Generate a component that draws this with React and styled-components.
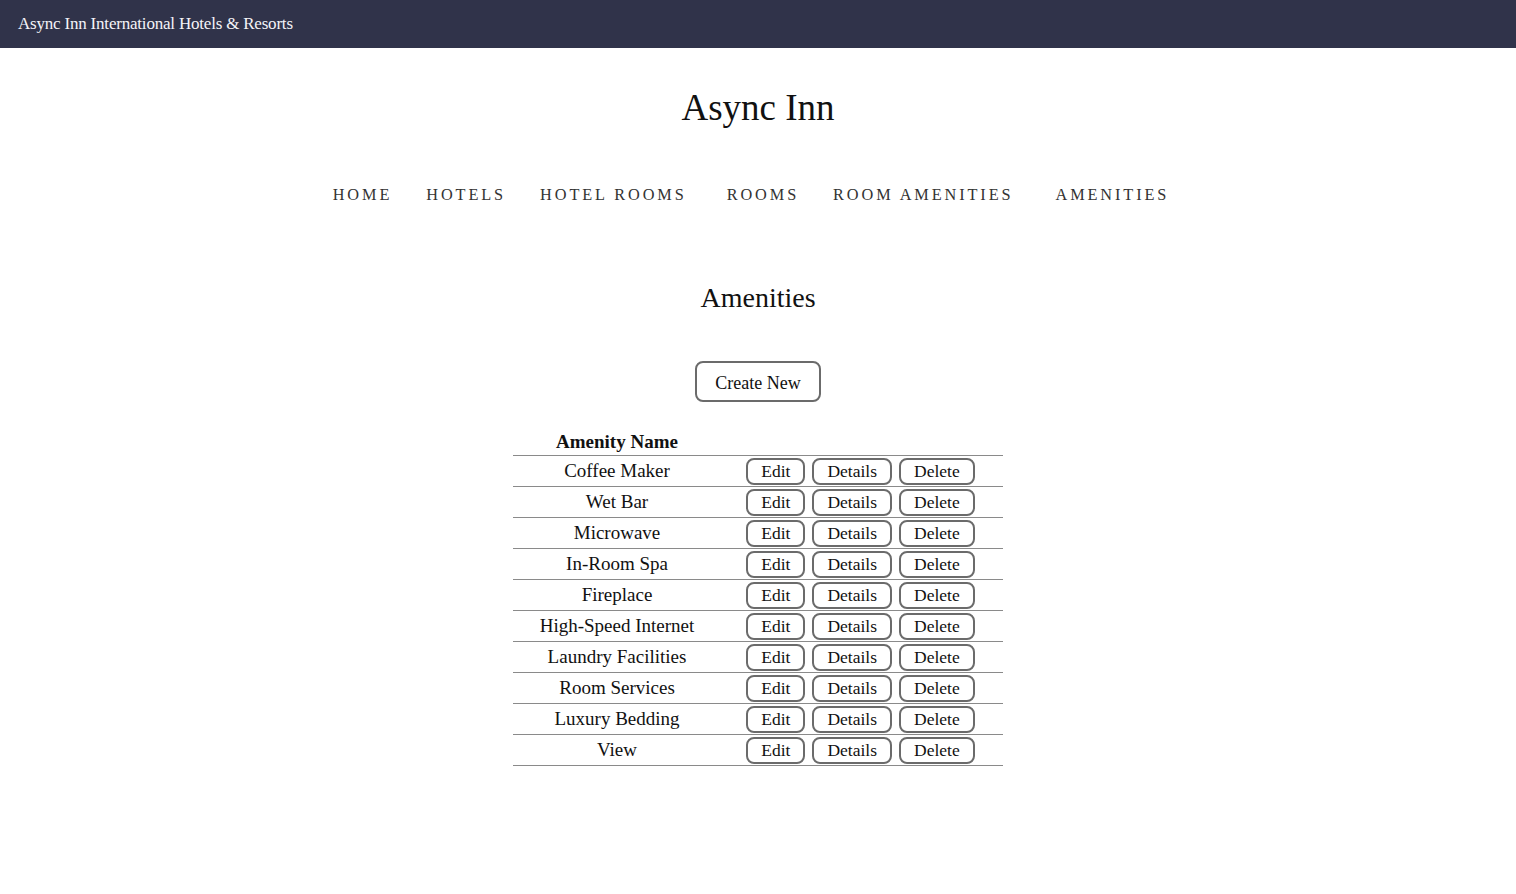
import React from 'react';
import styled, { createGlobalStyle } from 'styled-components';

const GlobalStyle = createGlobalStyle`
    body {
        margin: 0;
        background: #fff;
        font-family: "Liberation Serif", "Times New Roman", serif;
        color: #111;
    }
`;

const TopBar = styled.header`
    height: 48px;
    background: #30334a;
    display: flex;
    align-items: center;
    padding: 0 18px;
`;

const Brand = styled.span`
    color: #f4f4f8;
    font-size: 17px;
    letter-spacing: -0.2px;
`;

const Main = styled.main`
    display: flex;
    flex-direction: column;
    align-items: center;
`;

const Title = styled.h1`
    margin: 38px 0 0;
    font-size: 37px;
    font-weight: normal;
    line-height: 44px;
`;

const Nav = styled.nav`
    display: flex;
    gap: 34px;
    margin-top: 53px;
    padding-right: 14px;
`;

const NavLink = styled.a`
    font-size: 16.3px;
    letter-spacing: 2.9px;
    text-transform: uppercase;
    color: #333;
    text-decoration: none;
    line-height: 24px;
    margin-right: ${(p) => p.extra || 0}px;
`;

const Heading = styled.h2`
    margin: 74px 0 0;
    font-size: 28px;
    font-weight: normal;
    line-height: 34px;
`;

const Button = styled.button`
    font-family: inherit;
    font-size: ${(p) => (p.big ? '18px' : '17.5px')};
    color: #111;
    background: #fff;
    border: 2px solid #6b6b6b;
    border-radius: 8px;
    height: ${(p) => (p.big ? '41px' : '27px')};
    padding: ${(p) => (p.big ? '2px 18px 0' : '2px 13px 0')};
    line-height: 1;
    cursor: pointer;
`;

const CreateWrap = styled.div`
    margin-top: 46px;
`;

const Table = styled.table`
    margin-top: 27px;
    border-collapse: collapse;
    width: 490px;
    font-size: 19px;
`;

const HeadCell = styled.th`
    text-align: center;
    font-weight: bold;
    height: 26px;
    padding: 0;
    border-bottom: 1px solid #8a8a8a;
    width: ${(p) => p.w || 'auto'};
`;

const Cell = styled.td`
    text-align: center;
    height: 30px;
    padding: 0;
    border-bottom: 1px solid #8a8a8a;
`;

const Actions = styled.div`
    display: flex;
    justify-content: center;
    gap: 7px;
    padding-right: 3px;
`;

const amenities = [
    'Coffee Maker',
    'Wet Bar',
    'Microwave',
    'In-Room Spa',
    'Fireplace',
    'High-Speed Internet',
    'Laundry Facilities',
    'Room Services',
    'Luxury Bedding',
    'View',
];

const links = [
    ['Home', 0],
    ['Hotels', 0],
    ['Hotel Rooms', 6],
    ['Rooms', 0],
    ['Room Amenities', 8],
    ['Amenities', 0],
];

const App = () => (
    <>
        <GlobalStyle />
        <TopBar>
            <Brand>Async Inn International Hotels &amp; Resorts</Brand>
        </TopBar>
        <Main>
            <Title>Async Inn</Title>
            <Nav>
                {links.map(([label, extra]) => (
                    <NavLink key={label} href='#' extra={extra}>{label}</NavLink>
                ))}
            </Nav>
            <Heading>Amenities</Heading>
            <CreateWrap>
                <Button big>Create New</Button>
            </CreateWrap>
            <Table>
                <thead>
                    <tr>
                        <HeadCell w='208px'>Amenity Name</HeadCell>
                        <HeadCell />
                    </tr>
                </thead>
                <tbody>
                    {amenities.map((name) => (
                        <tr key={name}>
                            <Cell>{name}</Cell>
                            <Cell>
                                <Actions>
                                    <Button>Edit</Button>
                                    <Button>Details</Button>
                                    <Button>Delete</Button>
                                </Actions>
                            </Cell>
                        </tr>
                    ))}
                </tbody>
            </Table>
        </Main>
    </>
);

export default App;
